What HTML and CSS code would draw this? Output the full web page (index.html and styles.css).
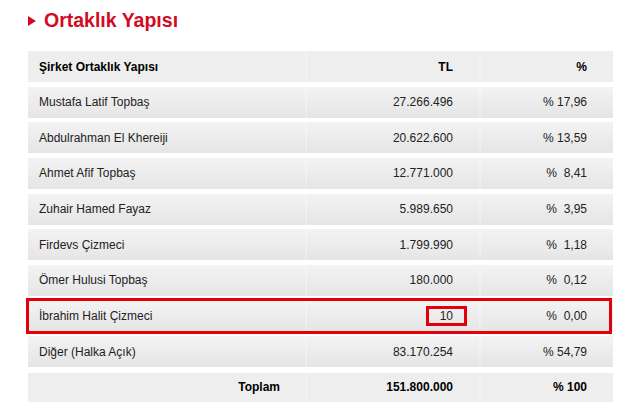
FILE: index.html
```html
<!DOCTYPE html>
<html lang="tr">
  <head>
    <meta charset="UTF-8" />
    <title>Ortaklık Yapısı</title>
    <link rel="stylesheet" href="styles.css">
  </head>
  <body>
    <div class="page">
      <h1 class="title">
        <svg class="title-arrow" width="8" height="10" viewBox="0 0 8 10"><polygon points="0,0 8,5 0,10" fill="#d20a24"/></svg>
        Ortaklık Yapısı
      </h1>

      <div class="share-table">
        <div class="row head">
          <div class="cell name">Şirket Ortaklık Yapısı</div>
          <div class="cell num">TL</div>
          <div class="cell pct">%</div>
        </div>
        <div class="row">
          <div class="cell name">Mustafa Latif Topbaş</div>
          <div class="cell num">27.266.496</div>
          <div class="cell pct">% 17,96</div>
        </div>
        <div class="row">
          <div class="cell name">Abdulrahman El Khereiji</div>
          <div class="cell num">20.622.600</div>
          <div class="cell pct">% 13,59</div>
        </div>
        <div class="row">
          <div class="cell name">Ahmet Afif Topbaş</div>
          <div class="cell num">12.771.000</div>
          <div class="cell pct">%  8,41</div>
        </div>
        <div class="row">
          <div class="cell name">Zuhair Hamed Fayaz</div>
          <div class="cell num">5.989.650</div>
          <div class="cell pct">%  3,95</div>
        </div>
        <div class="row">
          <div class="cell name">Firdevs Çizmeci</div>
          <div class="cell num">1.799.990</div>
          <div class="cell pct">%  1,18</div>
        </div>
        <div class="row">
          <div class="cell name">Ömer Hulusi Topbaş</div>
          <div class="cell num">180.000</div>
          <div class="cell pct">%  0,12</div>
        </div>
        <div class="row marked">
          <div class="cell name">İbrahim Halit Çizmeci</div>
          <div class="cell num"><span class="mark-box">10</span></div>
          <div class="cell pct">%  0,00</div>
        </div>
        <div class="row">
          <div class="cell name">Diğer (Halka Açık)</div>
          <div class="cell num">83.170.254</div>
          <div class="cell pct">% 54,79</div>
        </div>
        <div class="row total">
          <div class="cell name">Toplam</div>
          <div class="cell num">151.800.000</div>
          <div class="cell pct">% 100</div>
        </div>
      </div>
    </div>
  </body>
</html>
```

FILE: styles.css
```css
* {
  margin: 0;
  padding: 0;
  box-sizing: border-box;
  font-family: "Liberation Sans", Arial, sans-serif;
}

body {
  background-color: white;
  color: #222;
}

.page {
  padding: 8px 0 0 28px;
  width: 613px;
}

.title {
  display: flex;
  align-items: center;
  gap: 8px;
  font-size: 19.5px;
  line-height: 24px;
  font-weight: bold;
  color: #d20a24;
  margin-bottom: 19px;
}

.title-arrow {
  margin-top: 1px;
}

.share-table {
  display: flex;
  flex-direction: column;
  gap: 4.67px;
}

.row {
  position: relative;
  display: grid;
  grid-template-columns: 277px 174px 134px;
  height: 31px;
  background: linear-gradient(#f3f3f3, #e5e5e5);
  font-size: 12px;
}

.row.head,
.row.total {
  background: #eeeeee;
  font-weight: bold;
  color: #000;
}

.row.total {
  height: 29px;
  margin-top: 1px;
}

.cell {
  display: flex;
  align-items: center;
  white-space: pre;
}

.cell.name {
  padding-left: 11px;
}

.cell.num,
.cell.pct {
  justify-content: flex-end;
  padding-right: 26px;
  border-left: 2px solid rgba(255, 255, 255, 0.25);
}

.row.total .cell.name {
  justify-content: flex-end;
  padding-right: 25px;
}

.row.marked::after {
  content: "";
  position: absolute;
  left: -2px;
  right: 1px;
  top: -3px;
  bottom: -2px;
  border: 3px solid #e3000b;
  pointer-events: none;
}

.mark-box {
  display: inline-block;
  border: 3px solid #e3000b;
  line-height: 14px;
  padding: 0 11px;
  margin-right: -14px;
}
```
